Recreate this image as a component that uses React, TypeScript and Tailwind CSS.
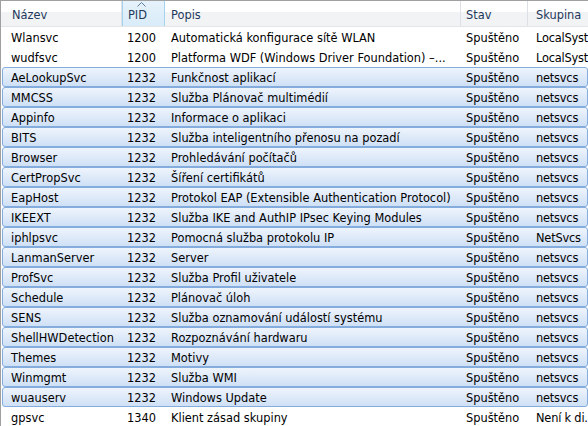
import React from "react";

type Row = { name: string; pid: string; desc: string; state: string; group: string; sel?: boolean };

const rows: Row[] = [
  { name: "Wlansvc", pid: "1200", desc: "Automatická konfigurace sítě WLAN", state: "Spuštěno", group: "LocalSystem" },
  { name: "wudfsvc", pid: "1200", desc: "Platforma WDF (Windows Driver Foundation) –...", state: "Spuštěno", group: "LocalSystem" },
  { name: "AeLookupSvc", pid: "1232", desc: "Funkčnost aplikací", state: "Spuštěno", group: "netsvcs", sel: true },
  { name: "MMCSS", pid: "1232", desc: "Služba Plánovač multimédií", state: "Spuštěno", group: "netsvcs", sel: true },
  { name: "Appinfo", pid: "1232", desc: "Informace o aplikaci", state: "Spuštěno", group: "netsvcs", sel: true },
  { name: "BITS", pid: "1232", desc: "Služba inteligentního přenosu na pozadí", state: "Spuštěno", group: "netsvcs", sel: true },
  { name: "Browser", pid: "1232", desc: "Prohledávání počítačů", state: "Spuštěno", group: "netsvcs", sel: true },
  { name: "CertPropSvc", pid: "1232", desc: "Šíření certifikátů", state: "Spuštěno", group: "netsvcs", sel: true },
  { name: "EapHost", pid: "1232", desc: "Protokol EAP (Extensible Authentication Protocol)", state: "Spuštěno", group: "netsvcs", sel: true },
  { name: "IKEEXT", pid: "1232", desc: "Služba IKE and AuthIP IPsec Keying Modules", state: "Spuštěno", group: "netsvcs", sel: true },
  { name: "iphlpsvc", pid: "1232", desc: "Pomocná služba protokolu IP", state: "Spuštěno", group: "NetSvcs", sel: true },
  { name: "LanmanServer", pid: "1232", desc: "Server", state: "Spuštěno", group: "netsvcs", sel: true },
  { name: "ProfSvc", pid: "1232", desc: "Služba Profil uživatele", state: "Spuštěno", group: "netsvcs", sel: true },
  { name: "Schedule", pid: "1232", desc: "Plánovač úloh", state: "Spuštěno", group: "netsvcs", sel: true },
  { name: "SENS", pid: "1232", desc: "Služba oznamování událostí systému", state: "Spuštěno", group: "netsvcs", sel: true },
  { name: "ShellHWDetection", pid: "1232", desc: "Rozpoznávání hardwaru", state: "Spuštěno", group: "netsvcs", sel: true },
  { name: "Themes", pid: "1232", desc: "Motivy", state: "Spuštěno", group: "netsvcs", sel: true },
  { name: "Winmgmt", pid: "1232", desc: "Služba WMI", state: "Spuštěno", group: "netsvcs", sel: true },
  { name: "wuauserv", pid: "1232", desc: "Windows Update", state: "Spuštěno", group: "netsvcs", sel: true },
  { name: "gpsvc", pid: "1340", desc: "Klient zásad skupiny", state: "Spuštěno", group: "Není k di." },
];

// header columns: Název, PID, Popis, Stav, Skupina
const headCols = "grid grid-cols-[121px_43px_296px_67px_120px]";
// rows start 2px further right (selection frame), so the first column is narrower
const rowCols = "grid grid-cols-[119px_43px_296px_67px_120px]";

export default function App() {
  return (
    <div
      className="w-[588px] h-[426px] overflow-hidden bg-white text-[11.4px] text-black border-t border-l border-[#a0a0a0]"
      style={{ fontFamily: "'DejaVu Sans', Tahoma, sans-serif" }}
    >
      {/* Header */}
      <div className={`${headCols} h-[26px] bg-gradient-to-b from-white from-45% to-[#f2f3f5] to-45% border-b border-[#e3e5e8] text-[#1e395b]`}>
        <div className="pl-[11px] pt-[6px] border-r border-[#dde0e5]">Název</div>
        <div className="relative pl-[5px] pt-[6px] bg-gradient-to-b from-[#e6f2fb] to-[#d9ecf9] border-x border-[#a6d2ee]">
          <svg className="absolute left-[14px] top-[1px]" width="9" height="5" viewBox="0 0 9 5">
            <path d="M0.5 4.5 L4.5 0.5 L8.5 4.5" fill="none" stroke="#5c7d9c" strokeWidth="1" />
          </svg>
          PID
        </div>
        <div className="pl-[6px] pt-[6px] border-r border-[#dde0e5]">Popis</div>
        <div className="pl-[5px] pt-[6px] border-r border-[#dde0e5]">Stav</div>
        <div className="pl-[8px] pt-[6px]">Skupina</div>
      </div>

      {/* Rows */}
      <div className="flex flex-col">
        {rows.map((r, i) => (
          <div
            key={i}
            className={`${rowCols} h-[20px] ml-[1px] pt-[2px] items-center whitespace-nowrap ${
              r.sel
                ? "rounded-[3px] border border-[#84acdd] bg-gradient-to-b from-[#eef4fc] to-[#cfe0f6]"
                : "border border-transparent"
            }`}
          >
            <div className="pl-[8px] overflow-hidden">{r.name}</div>
            <div className="pl-[5px]">{r.pid}</div>
            <div className="pl-[6px] overflow-hidden">{r.desc}</div>
            <div className="pl-[5px]">{r.state}</div>
            <div className="pl-[8px] overflow-hidden tracking-[-0.2px]">{r.group}</div>
          </div>
        ))}
      </div>
    </div>
  );
}
